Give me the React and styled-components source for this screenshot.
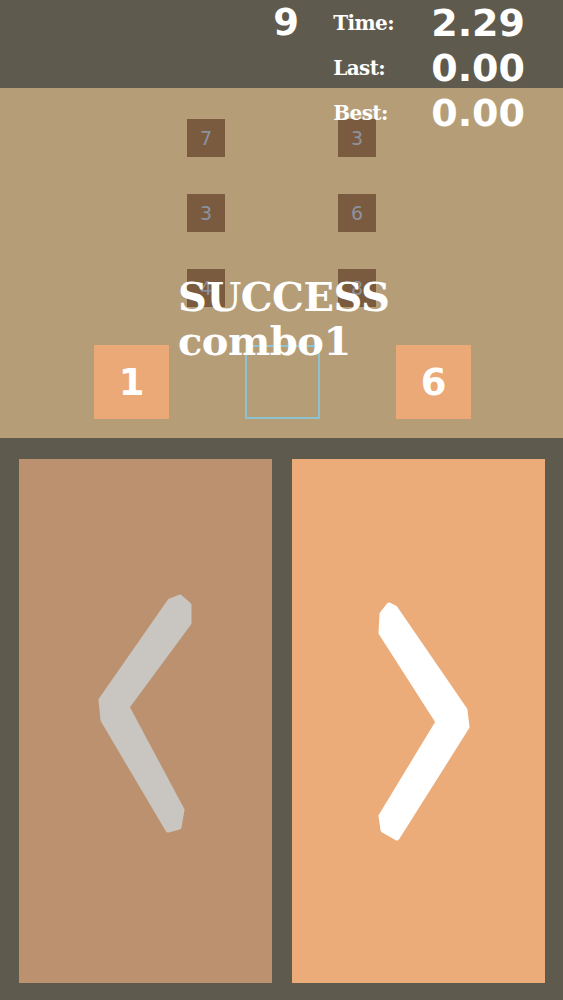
import React from 'react'
import styled, { createGlobalStyle } from 'styled-components'

const Global = createGlobalStyle`
  html, body { margin: 0; padding: 0; background: #5f5a4e; }
  body { width: 563px; height: 1000px; overflow: hidden; }
`

const Page = styled.div`
  width: 563px;
  height: 1000px;
  background-color: #5f5a4e;
  display: flex;
  flex-direction: column;
`

const TopBar = styled.div`
  height: 88px;
  display: flex;
  justify-content: flex-end;
  align-items: flex-start;
  padding-right: 38px;
  box-sizing: border-box;
`

const Score = styled.div`
  position: relative;
  z-index: 3;
  display: flex;
  align-items: flex-start;
  color: #fff;
`

const Count = styled.div`
  font-family: "DejaVu Sans", sans-serif;
  font-weight: 700;
  font-size: 37px;
  line-height: 44px;
  margin-top: 1px;
  width: 60px;
`

const Stats = styled.div`
  display: grid;
  grid-template-columns: 98px auto;
  grid-auto-rows: 45px;
  margin-top: 1px;
`

const Label = styled.div`
  font-family: "DejaVu Serif", serif;
  font-weight: 700;
  font-size: 20px;
  line-height: 45px;
  letter-spacing: -0.6px;
`

const Value = styled.div`
  font-family: "DejaVu Sans", sans-serif;
  font-weight: 700;
  font-size: 38px;
  line-height: 45px;
`

const Board = styled.div`
  position: relative;
  height: 350px;
  background-color: #b59e77;
  padding-top: 31px;
  box-sizing: border-box;
`

const CardGrid = styled.div`
  display: grid;
  grid-template-columns: 38px 38px;
  grid-auto-rows: 38px;
  column-gap: 113px;
  row-gap: 37px;
  padding-left: 187px;
`

const Card = styled.div`
  background-color: #7b5b3f;
  color: #8b93a0;
  font-family: "DejaVu Sans", sans-serif;
  font-size: 19px;
  display: flex;
  align-items: center;
  justify-content: center;
`

const Hand = styled.div`
  display: flex;
  gap: 76px;
  padding-left: 94px;
  margin-top: 38px;
`

const Slot = styled.div`
  width: 75px;
  height: 74px;
  box-sizing: border-box;
  background-color: ${p => (p.$empty ? 'transparent' : '#eaa976')};
  border: ${p => (p.$empty ? '2px solid #8cc3cf' : 'none')};
  color: #fff;
  font-family: "DejaVu Sans", sans-serif;
  font-weight: 700;
  font-size: 37px;
  display: flex;
  align-items: center;
  justify-content: center;
`

const Message = styled.div`
  position: absolute;
  left: 178px;
  top: 187px;
  color: #fff;
  font-family: "DejaVu Serif", serif;
  font-weight: 700;
  font-size: 40px;
  line-height: 44px;
  letter-spacing: -0.5px;
  z-index: 2;
`

const Controls = styled.div`
  flex: 1;
  display: flex;
  gap: 20px;
  padding: 21px 18px 17px 19px;
`

const Pad = styled.div`
  flex: 1;
  background-color: ${p => p.$bg};
  display: flex;
`

const Chevron = ({ points, color }) => (
  <svg width="253" height="524" viewBox="0 0 253 524">
    <polygon
      points={points}
      fill={color}
      stroke={color}
      strokeWidth="5"
      strokeLinejoin="round"
    />
  </svg>
)

const App = () => {
  return (
    <Page>
      <Global />
      <TopBar>
        <Score>
          <Count>9</Count>
          <Stats>
            <Label>Time:</Label>
            <Value>2.29</Value>
            <Label>Last:</Label>
            <Value>0.00</Value>
            <Label>Best:</Label>
            <Value>0.00</Value>
          </Stats>
        </Score>
      </TopBar>
      <Board>
        <CardGrid>
          <Card>7</Card>
          <Card>3</Card>
          <Card>3</Card>
          <Card>6</Card>
          <Card>4</Card>
          <Card>8</Card>
        </CardGrid>
        <Hand>
          <Slot>1</Slot>
          <Slot $empty />
          <Slot>6</Slot>
        </Hand>
        <Message>
          SUCCESS
          <br />
          combo1
        </Message>
      </Board>
      <Controls>
        <Pad $bg="#bc916f">
          <Chevron
            points="161,138 170,146 170,164 108,248 163,351 160,368 149,371 84,261 82,241 151,142"
            color="#c9c6c1"
          />
        </Pad>
        <Pad $bg="#ebac79">
          <Chevron
            points="90,155 97,146 103,149 173,251 175,268 105,379 91,371 89,357 146,263 89,174"
            color="#ffffff"
          />
        </Pad>
      </Controls>
    </Page>
  )
}

export default App
